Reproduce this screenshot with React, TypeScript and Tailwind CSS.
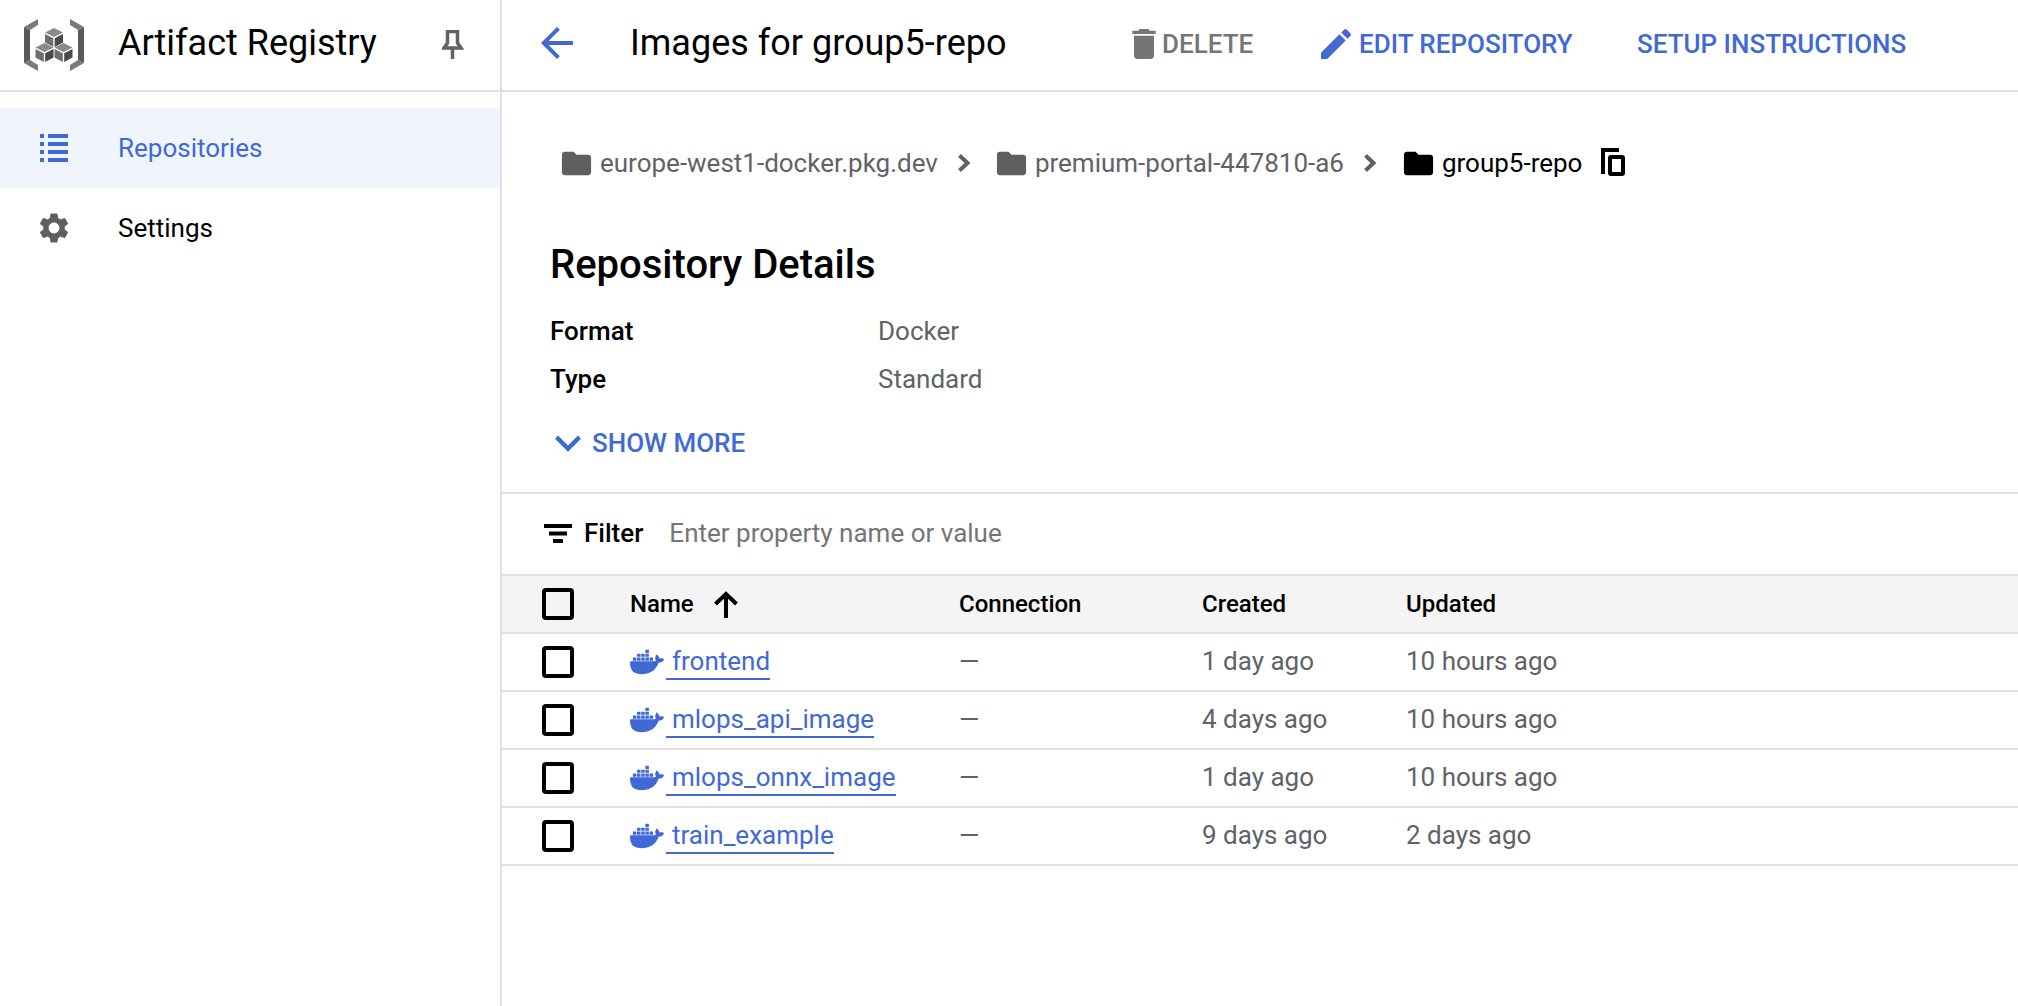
import React from "react";
import { MdArrowBack, MdDelete, MdEdit, MdExpandMore, MdFolder, MdSettings } from "react-icons/md";
import { SiDocker } from "react-icons/si";

function Cube({ x, y }: { x: number; y: number }) {
  return (
    <g transform={`translate(${x} ${y})`}>
      <polygon points="0,-8 9,-3.5 0,1 -9,-3.5" fill="#8a8a8a" />
      <polygon points="-9,-2 -0.7,2.2 -0.7,11 -9,6.5" fill="#6e6e6e" />
      <polygon points="9,-2 0.7,2.2 0.7,11 9,6.5" fill="#4a4a4a" />
    </g>
  );
}

function Logo() {
  return (
    <svg width="60" height="52" viewBox="24 16 60 52" className="shrink-0">
      <polygon points="38,16 24,24 30,27 38,22" fill="#7a7a7a" />
      <polygon points="24,24 30,27 30,57 24,60" fill="#5a5a5a" />
      <polygon points="24,60 30,57 38,62 38,68" fill="#7a7a7a" />
      <polygon points="70,16 84,24 78,27 70,22" fill="#7a7a7a" />
      <polygon points="84,24 78,27 78,57 84,60" fill="#5a5a5a" />
      <polygon points="84,60 78,57 70,62 70,68" fill="#7a7a7a" />
      <Cube x={54} y={33} />
      <Cube x={44.5} y={48} />
      <Cube x={63.5} y={48} />
    </svg>
  );
}

function Pin() {
  return (
    <svg width="22" height="30" viewBox="442 29 22 30" fill="none" stroke="#5f6368" strokeWidth="3.5" className="shrink-0">
      <path d="M447.5 30.5H457.5V42L461 47H444L447.5 42Z" />
      <path d="M452.5 47V58" />
    </svg>
  );
}

function ListIcon() {
  return (
    <svg width="28" height="28" viewBox="0 0 28 28" fill="currentColor" className="shrink-0">
      {[0, 8, 16, 24].map((y) => (
        <g key={y}>
          <rect x="0" y={y} width="4" height="4" />
          <rect x="8" y={y} width="20" height="4" />
        </g>
      ))}
    </svg>
  );
}

function CopyIcon() {
  return (
    <svg width="24" height="28" viewBox="0 0 24 28" className="shrink-0 ml-[19px] -mt-[2px]">
      <path d="M2 26V2H18" fill="none" stroke="#000" strokeWidth="4" />
      <rect x="9" y="9" width="13" height="17" rx="1" fill="none" stroke="#000" strokeWidth="4" />
    </svg>
  );
}

function FilterIcon() {
  return (
    <svg width="28" height="19" viewBox="0 0 28 19" fill="currentColor" className="shrink-0">
      <rect x="0" y="0" width="28" height="4" />
      <rect x="5" y="7.5" width="18" height="4" />
      <rect x="9" y="15" width="10" height="4" />
    </svg>
  );
}

function ArrowUp() {
  return (
    <svg width="24" height="27" viewBox="0 0 24 27" fill="none" stroke="#000" strokeWidth="4" className="shrink-0 ml-[20px]">
      <path d="M12 27V3" />
      <path d="M1.5 13L12 3L22.5 13" />
    </svg>
  );
}

function Chevron({ cls }: { cls: string }) {
  return (
    <svg width="14" height="18" viewBox="0 0 14 18" fill="none" stroke="#5f5f5f" strokeWidth="4" className={`shrink-0 ${cls}`}>
      <path d="M2.5 1.5L10.5 9L2.5 16.5" />
    </svg>
  );
}

function Check() {
  return <div className="w-[32px] h-[32px] rounded-[4px] border-[4px] border-black shrink-0" />;
}

const rows = [
  { name: "frontend", created: "1 day ago", updated: "10 hours ago" },
  { name: "mlops_api_image", created: "4 days ago", updated: "10 hours ago" },
  { name: "mlops_onnx_image", created: "1 day ago", updated: "10 hours ago" },
  { name: "train_example", created: "9 days ago", updated: "2 days ago" },
];

function Crumb({ text, dark }: { text: string; dark?: boolean }) {
  return (
    <div className={`flex items-center ${dark ? "text-black" : "text-[#5f6368]"}`}>
      <MdFolder size={35} className={dark ? "text-black" : "text-[#5f5f5f]"} />
      <span className="ml-[6px] text-[26px] leading-[36px]">{text}</span>
    </div>
  );
}

function Cols({ check, name, conn, created, updated, cls, text }: { check: React.ReactNode; name: React.ReactNode; conn: React.ReactNode; created: React.ReactNode; updated: React.ReactNode; cls: string; text?: string }) {
  return (
    <div className={`flex items-center border-b-2 border-[#e0e0e0] h-[58px] ${cls}`}>
      <div className="w-[128px] pl-[40px] flex items-center shrink-0">{check}</div>
      <div className="w-[329px] shrink-0 flex items-center">{name}</div>
      <div className={`w-[243px] shrink-0 ${text ?? ""}`}>{conn}</div>
      <div className={`w-[204px] shrink-0 ${text ?? ""}`}>{created}</div>
      <div className={text}>{updated}</div>
    </div>
  );
}

export default function App() {
  return (
    <div className="flex h-[1006px] w-[2018px] overflow-hidden bg-white text-black font-['Roboto',sans-serif]">
      <aside className="w-[502px] shrink-0 border-r-2 border-[#e0e0e0]">
        <div className="h-[92px] border-b-2 border-[#e0e0e0] flex items-center pl-[24px]">
          <Logo />
          <span className="ml-[34px] text-[36px] leading-[44px] w-[324px] pb-[4px]">Artifact Registry</span>
          <Pin />
        </div>
        <nav className="pt-[16px]">
          <div className="h-[80px] bg-[#eff4fd] flex items-center pl-[40px] text-[#4169d6]">
            <ListIcon />
            <span className="ml-[50px] text-[26px]">Repositories</span>
          </div>
          <div className="h-[80px] flex items-center pl-[36px]">
            <MdSettings size={36} className="text-[#5f5f5f]" />
            <span className="ml-[46px] text-[26px]">Settings</span>
          </div>
        </nav>
      </aside>
      <main className="flex-1 min-w-0">
        <div className="h-[92px] border-b-2 border-[#e0e0e0] flex items-center pl-[32px]">
          <MdArrowBack size={48} className="text-[#4169d6] shrink-0 mb-[4px] -ml-[1px] mr-[1px]" />
          <span className="ml-[48px] text-[36px] w-[492px] pb-[4px]">Images for group5-repo</span>
          <div className="flex items-center text-[#757575] text-[26px] font-medium w-[194px] pb-[2px]">
            <MdDelete size={40} className="ml-[2px] -mr-[2px]" />
            <span>DELETE</span>
          </div>
          <div className="flex items-center text-[#4169d6] text-[26px] font-medium w-[321px] pb-[2px]">
            <MdEdit size={40} />
            <span className="ml-[3px]">EDIT REPOSITORY</span>
          </div>
          <span className="text-[#4169d6] text-[26px] font-medium pb-[2px]">SETUP INSTRUCTIONS</span>
        </div>
        <div className="h-[402px] border-b-2 border-[#e0e0e0] pl-[48px]">
          <div className="flex items-center pt-[53px] pl-[9px]">
            <Crumb text="europe-west1-docker.pkg.dev" />
            <Chevron cls="ml-[19px] mr-[23px]" />
            <Crumb text="premium-portal-447810-a6" />
            <Chevron cls="ml-[19px] mr-[24px]" />
            <Crumb text="group5-repo" dark />
            <CopyIcon />
          </div>
          <h2 className="mt-[60px] text-[40px] leading-[48px] font-medium">Repository Details</h2>
          <div className="mt-[18px] flex items-center h-[48px] text-[26px]">
            <span className="w-[328px] font-medium">Format</span>
            <span className="text-[#5f6368]">Docker</span>
          </div>
          <div className="flex items-center h-[48px] text-[26px]">
            <span className="w-[328px] font-medium">Type</span>
            <span className="text-[#5f6368]">Standard</span>
          </div>
          <div className="mt-[14px] flex items-center text-[#4169d6] text-[26px] font-medium ml-[-8px]">
            <MdExpandMore size={52} />
            <span className="ml-[-2px]">SHOW MORE</span>
          </div>
        </div>
        <div className="h-[82px] border-b-2 border-[#e0e0e0] flex items-center pl-[42px] pb-[2px]">
          <FilterIcon />
          <span className="ml-[12px] text-[26px] font-medium">Filter</span>
          <span className="ml-[26px] text-[26px] text-[#757575]">Enter property name or value</span>
        </div>
        <Cols
          cls="bg-[#f4f4f4] text-[24px] font-medium"
          check={<Check />}
          name={<><span>Name</span><ArrowUp /></>}
          conn="Connection"
          created="Created"
          updated="Updated"
        />
        {rows.map((r) => (
          <Cols
            key={r.name}
            cls="text-[26px] text-[#5f6368]"
            text="pb-[2px]"
            check={<Check />}
            name={
              <div className="flex items-center text-[#4169d6]">
                <SiDocker size={34} className="shrink-0" />
                <span className="ml-[2px] border-b-2 border-[#4169d6] leading-[34px] pl-[6px]">{r.name}</span>
              </div>
            }
            conn="—"
            created={r.created}
            updated={r.updated}
          />
        ))}
      </main>
    </div>
  );
}
